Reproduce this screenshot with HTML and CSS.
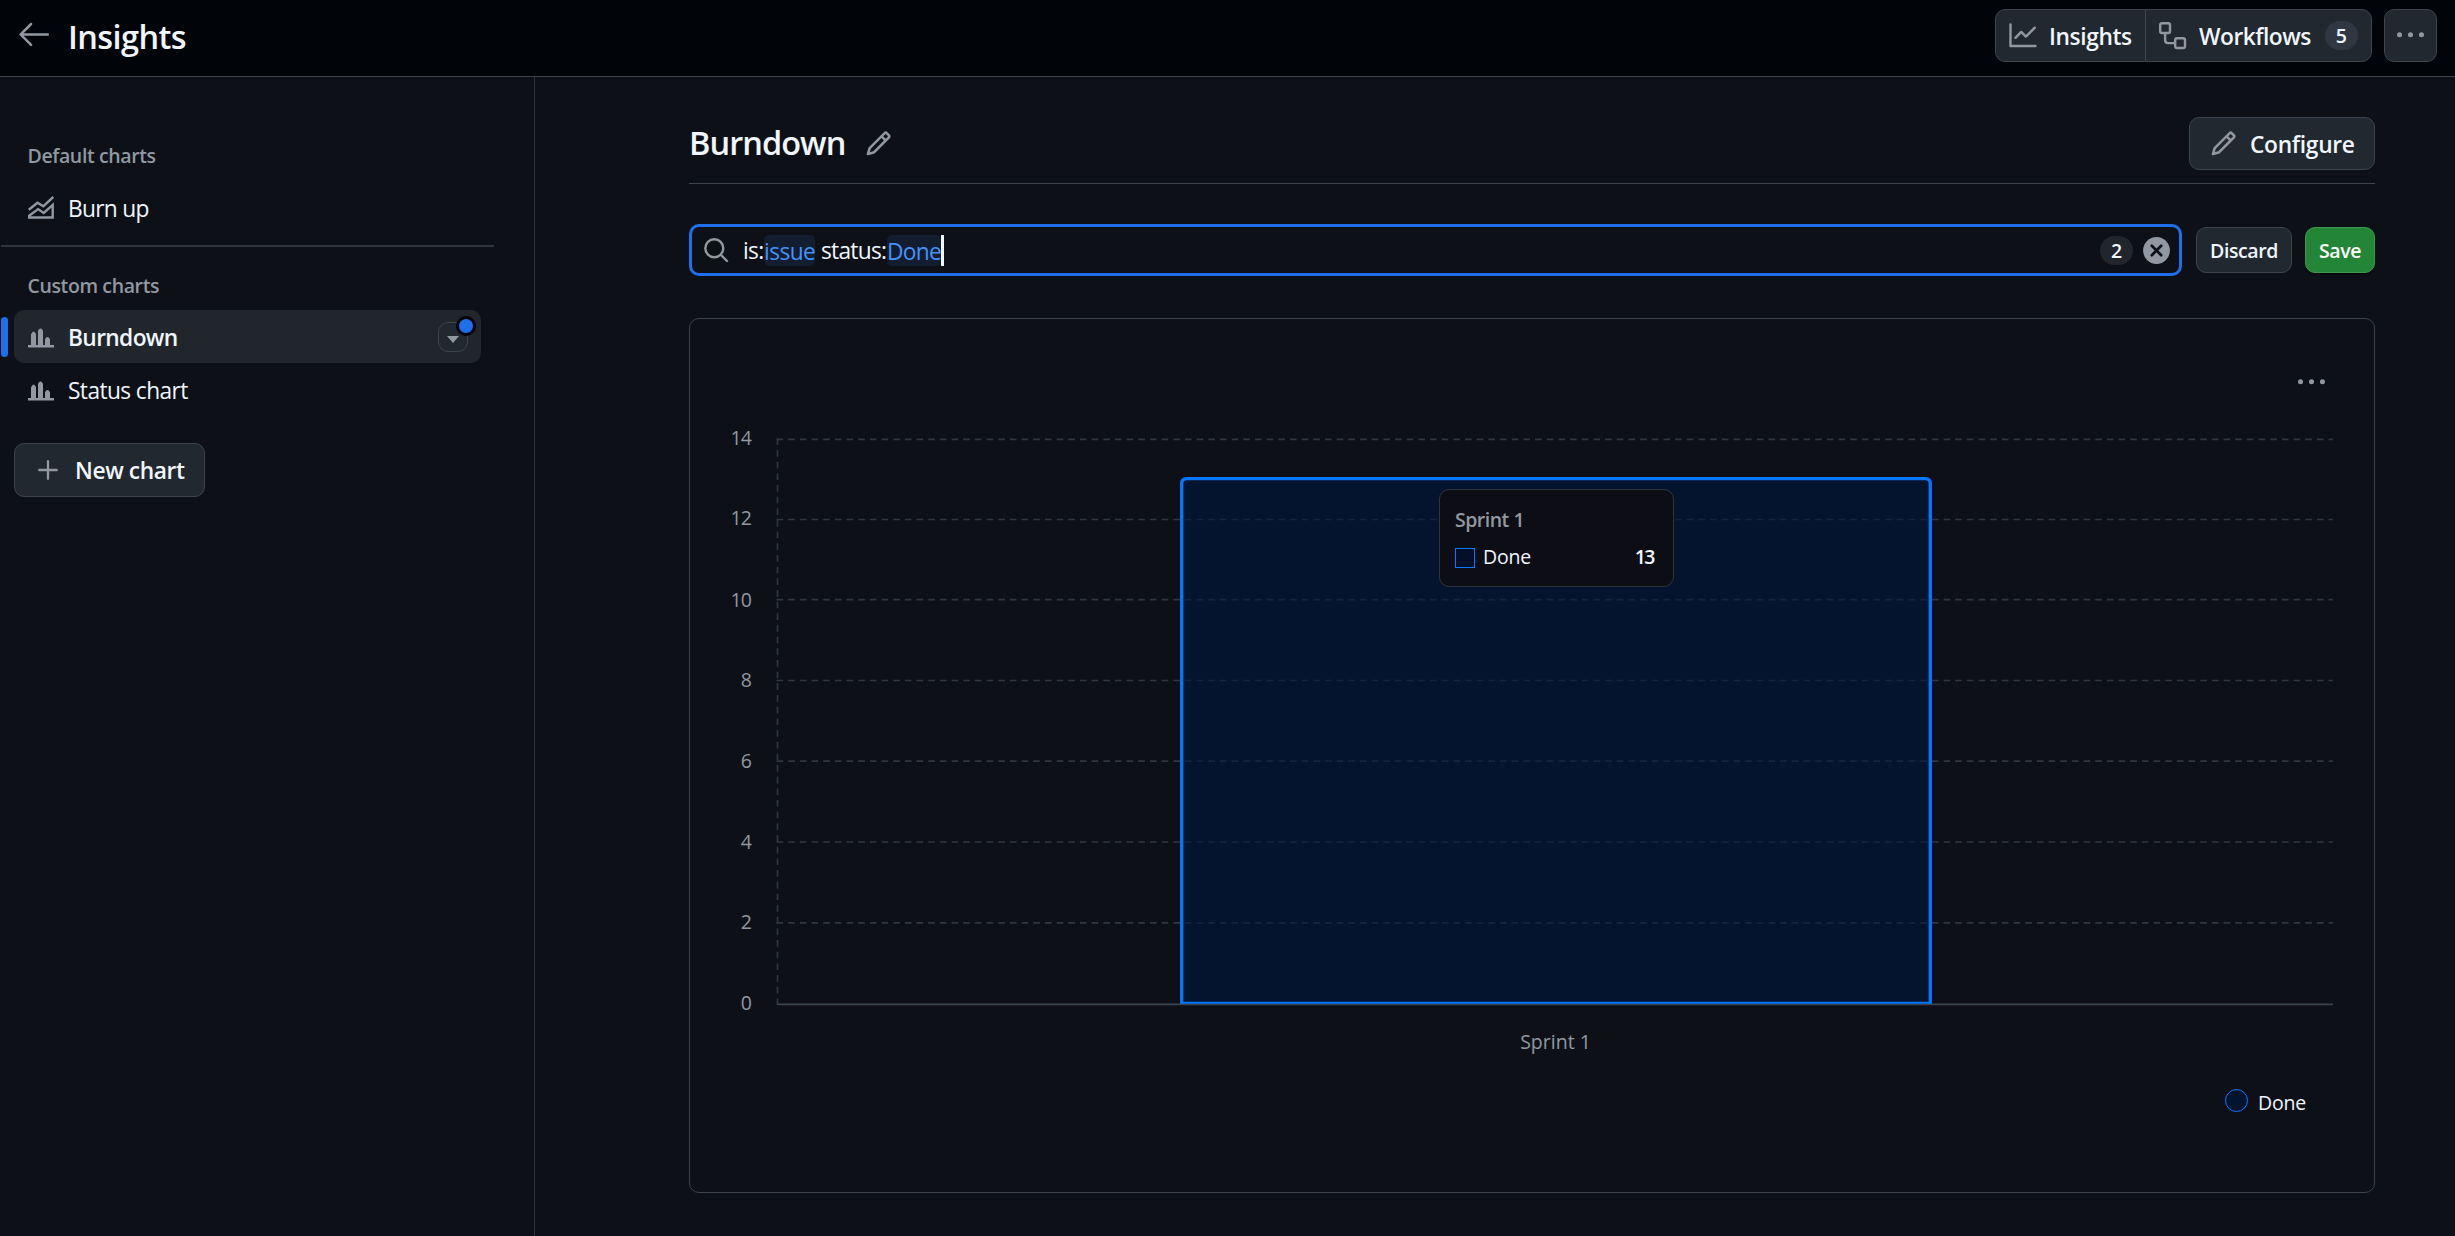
FILE: index.html
```html
<!DOCTYPE html>
<html lang="en">
<head>
<meta charset="utf-8">
<title>Insights</title>
<link rel="stylesheet" href="styles.css">
</head>
<body>
<svg width="0" height="0" class="defs">
  <symbol id="pencil" viewBox="0 0 16 16"><path fill="currentColor" d="M11.013 1.427a1.75 1.75 0 0 1 2.474 0l1.086 1.086a1.75 1.75 0 0 1 0 2.474l-8.61 8.61c-.21.21-.47.364-.756.445l-3.251.93a.75.75 0 0 1-.927-.928l.929-3.25c.081-.286.235-.547.445-.758l8.61-8.61Zm.176 4.823L9.75 4.81l-6.286 6.287a.253.253 0 0 0-.064.108l-.558 1.953 1.953-.558a.253.253 0 0 0 .108-.064Zm1.238-3.763a.25.25 0 0 0-.354 0L10.811 3.75l1.439 1.44 1.263-1.263a.25.25 0 0 0 0-.354Z"/></symbol>
  <symbol id="kebab" viewBox="0 0 16 16"><path fill="currentColor" d="M8 9a1.5 1.5 0 1 0 0-3 1.5 1.5 0 0 0 0 3ZM1.5 9a1.5 1.5 0 1 0 0-3 1.5 1.5 0 0 0 0 3Zm13 0a1.5 1.5 0 1 0 0-3 1.5 1.5 0 0 0 0 3Z"/></symbol>
  <symbol id="bars" viewBox="0 0 26 20"><path fill="currentColor" d="M0 17h3V6.500q0-1 1-1.500l.500-1q1-.800 2 0l.500.800q1 .500 1 1.500V17h2V3q0-1 1-1.500l.500-.800q1-.600 2 0l.500.800q1 .500 1 1.500v14h2v-5.500q0-1 1-1.500l.500-.800q1-.600 2 0l.500.800q1 .500 1 1.500V17h4v2.500H0Z"/></symbol>
</svg>

<header class="topbar">
  <svg class="back" viewBox="0 0 24 24"><path fill="currentColor" d="M10.780 19.030a.750.750 0 0 1-1.060 0l-6.250-6.250a.749.749 0 0 1 0-1.060l6.250-6.250a.749.749 0 1 1 1.060 1.060L5.810 11.500h14.440a.750.750 0 0 1 0 1.500H5.810l4.970 4.970a.750.750 0 0 1 0 1.060Z"/></svg>
  <h1 class="page-title">Insights</h1>
  <div class="btn-group">
    <button class="btn seg seg-insights">
      <svg width="28" height="26" viewBox="0 0 28 26" fill="none" stroke="currentColor" stroke-width="2.400" stroke-linecap="round" stroke-linejoin="round"><path d="M1.500 1.500v21.500h25M6.500 14.800l5.700-5.900 4.700 4.700 8.900-8.900"/></svg>
      <span class="t-insights">Insights</span>
    </button>
    <button class="btn seg seg-workflows">
      <svg width="28" height="28" viewBox="0 0 28 28" fill="none" stroke="currentColor" stroke-width="2.400"><rect x="1.200" y="1.200" width="9.800" height="9.800" rx="1.800"/><rect x="16.200" y="16.200" width="9.800" height="9.800" rx="1.800"/><path d="M6.100 11v7q0 3.100 3.100 3.100h7"/></svg>
      <span class="t-workflows">Workflows</span>
      <span class="counter">5</span>
    </button>
  </div>
  <button class="btn kebab-btn"><svg width="27" height="27"><use href="#kebab"/></svg></button>
</header>

<div class="body">
  <nav class="sidebar">
    <h2 class="group-title">Default charts</h2>
    <a class="item"><svg width="26" height="23" viewBox="0 0 26 23" fill="none" stroke="currentColor" stroke-width="2.400"><path d="M.800 13.800L9.500 6.700l5.800 3.600L25.300.900M1.200 21.500v-1.800l8.900-6.600 5.700 3.800 8.900-8v12.600Z"/></svg><span class="t-burnup">Burn up</span></a>
    <hr class="divider">
    <h2 class="group-title custom">Custom charts</h2>
    <a class="item active"><svg class="bars" width="26" height="20"><use href="#bars"/></svg><span class="t-active">Burndown</span>
      <span class="caret-btn"><svg width="12" height="7" viewBox="0 0 12 7"><path fill="currentColor" d="M0 0h12L6 7Z"/></svg><i class="dot"></i></span>
    </a>
    <a class="item"><svg class="bars" width="26" height="20"><use href="#bars"/></svg><span class="t-status">Status chart</span></a>
    <button class="btn new-chart"><svg width="20" height="20" viewBox="0 0 20 20" stroke="currentColor" stroke-width="2.300" stroke-linecap="round"><path d="M10 1.200v17.600M1.200 10h17.600"/></svg><span class="t-new">New chart</span></button>
  </nav>

  <main class="main">
    <div class="chart-head">
      <h2 class="chart-title">Burndown</h2>
      <svg class="edit" width="27" height="27"><use href="#pencil"/></svg>
      <button class="btn configure"><svg width="27" height="27"><use href="#pencil"/></svg><span class="t-configure">Configure</span></button>
    </div>
    <div class="filter-row">
      <div class="search">
        <svg width="26" height="26" viewBox="0 0 26 26" fill="none" stroke="currentColor" stroke-width="2.400" stroke-linecap="round"><circle cx="11.300" cy="11.300" r="9"/><path d="M18 18l6 6"/></svg>
        <div class="query"><span class="key is">is:</span><span class="chip issue">issue</span><span class="key status">status:</span><span class="chip done">Done</span><i class="cursor"></i></div>
        <span class="counter dim">2</span>
        <svg class="clear" width="27" height="27" viewBox="0 0 27 27"><circle cx="13.500" cy="13.500" r="13.400" fill="#9198a1"/><path d="M8.800 8.800l9.400 9.400M18.200 8.800l-9.400 9.400" stroke="#0d1117" stroke-width="2.700" stroke-linecap="round"/></svg>
      </div>
      <button class="btn small discard">Discard</button>
      <button class="btn small save">Save</button>
    </div>
    <section class="card">
      <div class="card-tools"><svg width="27" height="27"><use href="#kebab"/></svg></div>
      <svg class="plot" width="1684" height="645" viewBox="690 425 1684 645">
        <g class="grid">
          <path d="M776.500 439.300H2333M776.500 519.500H2333M776.500 599.700H2333M776.500 680.500H2333M776.500 761.200H2333M776.500 842H2333M776.500 922.800H2333"/>
          <path d="M777.500 438.300V1004"/>
        </g>
        <path class="axis" d="M776.700 1004.300H2333"/>
        <path class="bar-fill" d="M1182 1002V484q0-6 6-6h736q6 0 6 6v518Z"/>
        <path class="bar-line" d="M1181.700 1003.700V483.700q0-5 5-5H1925.300q5 0 5 5V1003.700"/>
        <path class="bar-base" d="M1180 1002.700H1932"/>
        <g class="ticks">
          <text x="751" y="445">14</text><text x="751" y="525">12</text><text x="751" y="607">10</text><text x="751" y="687">8</text><text x="751" y="768">6</text><text x="751" y="848.500">4</text><text x="751" y="929">2</text><text x="751" y="1010">0</text>
        </g>
        <text class="xlabel" x="1555.500" y="1048.800">Sprint 1</text>
      </svg>
      <div class="legend"><i class="swatch"></i><span>Done</span></div>
      <div class="tooltip">
        <div class="tip-title">Sprint 1</div>
        <div class="tip-row"><i class="box"></i><span class="tip-name">Done</span><b class="tip-val">13</b></div>
      </div>
    </section>
  </main>
</div>
</body>
</html>
```
FILE: styles.css
```css
* { box-sizing: border-box; margin: 0; padding: 0; }
body {
  width: 2455px; height: 1236px; overflow: hidden;
  display: flex; flex-direction: column;
  background: #0d1117; color: #f0f6fc;
  font-family: "Open Sans", "Noto Sans", sans-serif; font-size: 22.75px; line-height: 32px;
}
svg { display: block; flex: none; color: #9198a1; }
.defs { display: none; }
span { white-space: nowrap; }

.btn {
  display: flex; align-items: center; flex: none;
  font: 600 22.75px/32px "Open Sans", "Noto Sans", sans-serif; color: #f0f6fc;
  background: #212830; border: 1.5px solid #3d444d; border-radius: 10px;
}
.btn span { position: relative; top: 1px; }

.topbar {
  display: flex; align-items: flex-start; flex: none;
  height: 77px; padding: 9px 18px 0 14px;
  background: #010409; border-bottom: 1px solid #3d444d;
}
.back { width: 40px; height: 40px; margin-top: 5px; }
.page-title { margin: 6px 0 0 14px; font-size: 32.5px; line-height: 44px; font-weight: 600; letter-spacing: -0.6px; }
.btn-group { display: flex; margin-left: auto; }
.seg { height: 53px; }
.seg-insights { width: 151px; padding-left: 13px; border-radius: 10px 0 0 10px; }
.seg-workflows { width: 227px; padding-left: 13px; border-radius: 0 10px 10px 0; margin-left: -1px; }
.t-insights { margin-left: 12px; letter-spacing: -0.4px; }
.t-workflows { margin-left: 12px; letter-spacing: -0.5px; }
.counter {
  width: 33px; height: 29px; border-radius: 15px; flex: none;
  background: #2f3742; text-align: center;
  font-size: 19.5px; font-weight: 600; line-height: 30px;
}
.seg-workflows .counter { margin-left: 14px; top: 0; }
.kebab-btn { width: 53px; height: 53px; margin-left: 12px; justify-content: center; }

.body { display: flex; flex: 1; }
.sidebar { width: 535px; padding: 64px 0 0 0; border-right: 1px solid #2d333b; }
.group-title { padding-left: 27.5px; font-size: 19.5px; line-height: 30px; font-weight: 600; color: #9198a1; letter-spacing: -0.38px; }
.custom { margin-bottom: 9px; }
.item { display: flex; align-items: center; height: 53px; width: 467px; margin-left: 14px; padding-left: 14px; border-radius: 10px; position: relative; }
.group-title + .item { margin-top: 10px; }
.group-title.custom + .item { margin-top: 0; }
.item > span:not(.caret-btn) { margin: 2px 0 0 14px; }
.item > .t-burnup { margin-top: 1px; letter-spacing: -0.7px; }
.t-status { letter-spacing: -0.6px; }
.t-active { font-weight: 600; letter-spacing: -0.65px; }
.bars { margin-top: 2px; }
.divider { height: 2px; border: 0; background: #2f353d; width: 493px; margin: 11px 0 24px 1px; }
.active { background: #21252c; }
.active::before { content: ""; position: absolute; left: -13px; top: 7px; width: 7px; height: 40px; border-radius: 4px; background: #1f6feb; }
.caret-btn {
  display: flex; align-items: center; justify-content: center; position: relative;
  width: 30px; height: 30px; margin: 0 13px 0 auto; padding-top: 5px;
  background: #212830; border: 1.5px solid #3d444d; border-radius: 10px;
}
.dot { position: absolute; left: 17px; top: -7px; width: 20px; height: 20px; border-radius: 50%; background: #1f6feb; border: 3px solid #010409; }
.new-chart { width: 191px; height: 54px; margin: 27px 0 0 14px; padding-left: 23px; }
.t-new { margin-left: 17px; letter-spacing: -0.4px; }

.main { flex: 1; padding: 40px 80px 0 154px; }
.chart-head { display: flex; align-items: center; height: 67px; padding-bottom: 13px; border-bottom: 1px solid #3d444d; }
.chart-title { font-size: 32.5px; line-height: 44px; font-weight: 600; letter-spacing: -0.95px; margin-top: -2px; width: 176px; }
.configure { width: 186px; height: 53px; margin-left: auto; padding-left: 20px; }
.t-configure { margin-left: 13px; letter-spacing: -0.3px; }

.filter-row { display: flex; align-items: center; height: 52px; margin-top: 40px; }
.search { display: flex; align-items: center; width: 1493px; height: 52px; border: 3px solid #1f6feb; border-radius: 10px; padding: 0 9px 0 11px; }
.query { display: flex; align-items: center; flex: 1; margin-left: 14px; height: 31px; line-height: 33px; }
.is { width: 21px; letter-spacing: -0.7px; }
.issue { width: 51px; letter-spacing: -0.6px; margin-right: 6px; }
.status { width: 66px; letter-spacing: -0.75px; }
.done { width: 54px; letter-spacing: -0.7px; }
.chip { height: 31px; border-radius: 5px; background: #121d2f; color: #4493f8; }
.cursor { width: 3px; height: 31px; background: #f0f6fc; }
.dim { background: #21252c; }
.clear { margin-left: 10px; }
.small { height: 46px; justify-content: center; font-size: 19.5px; letter-spacing: -0.4px; padding-top: 2px; }
.discard { width: 96px; margin-left: 14px; }
.save { width: 70px; margin-left: 13px; background: #238636; border-color: #3e9850; color: #fff; box-shadow: 0 2px 2px #01040980; }

.card { display: flex; flex-direction: column; position: relative; height: 875px; margin-top: 42px; border: 1px solid #3d444d; border-radius: 10px; }
.card-tools { display: flex; justify-content: flex-end; height: 106px; padding: 50px 49px 0 0; }
.grid path { fill: none; stroke: #30363d; stroke-width: 1.67px; stroke-dasharray: 6.67 5; }
.axis { stroke: #3d444d; stroke-width: 1.8px; }
.bar-fill { fill: #00163f; fill-opacity: 0.58; }
.bar-line { fill: none; stroke: #0576ff; stroke-width: 3.3px; }
.bar-base { stroke: #0576ff; stroke-width: 2px; }
.ticks text { font-size: 19.5px; letter-spacing: -0.9px; text-anchor: end; fill: #9198a1; }
.xlabel { font-size: 19.5px; text-anchor: middle; fill: #9198a1; }
.legend { display: flex; justify-content: flex-end; padding-right: 68px; font-size: 19.5px; letter-spacing: -0.2px; line-height: 30px; }
.legend span { margin-top: 18px; }
.swatch { width: 23px; height: 23px; margin: 19px 10px 0 0; border: 1.5px solid #0576ff; border-radius: 50%; background: #03142d; }

.tooltip {
  position: absolute; left: 749px; top: 170px; width: 235px; height: 98px;
  padding: 13px 19px 0 15px; background: #0d0e15; border: 1.67px solid #2f353d; border-radius: 10px;
  font-size: 19.5px; line-height: 30px;
}
.tip-title { margin-top: 2px; color: #9198a1; font-weight: 600; letter-spacing: -0.5px; }
.tip-row { display: flex; align-items: center; margin-top: 7px; }
.box { width: 20px; height: 20px; margin-top: 2px; border: 1px solid #0576ff; background: #031027; }
.tip-name { margin-left: 8px; letter-spacing: -0.2px; }
.tip-val { margin-left: auto; font-weight: 600; letter-spacing: -1.5px; }
```
